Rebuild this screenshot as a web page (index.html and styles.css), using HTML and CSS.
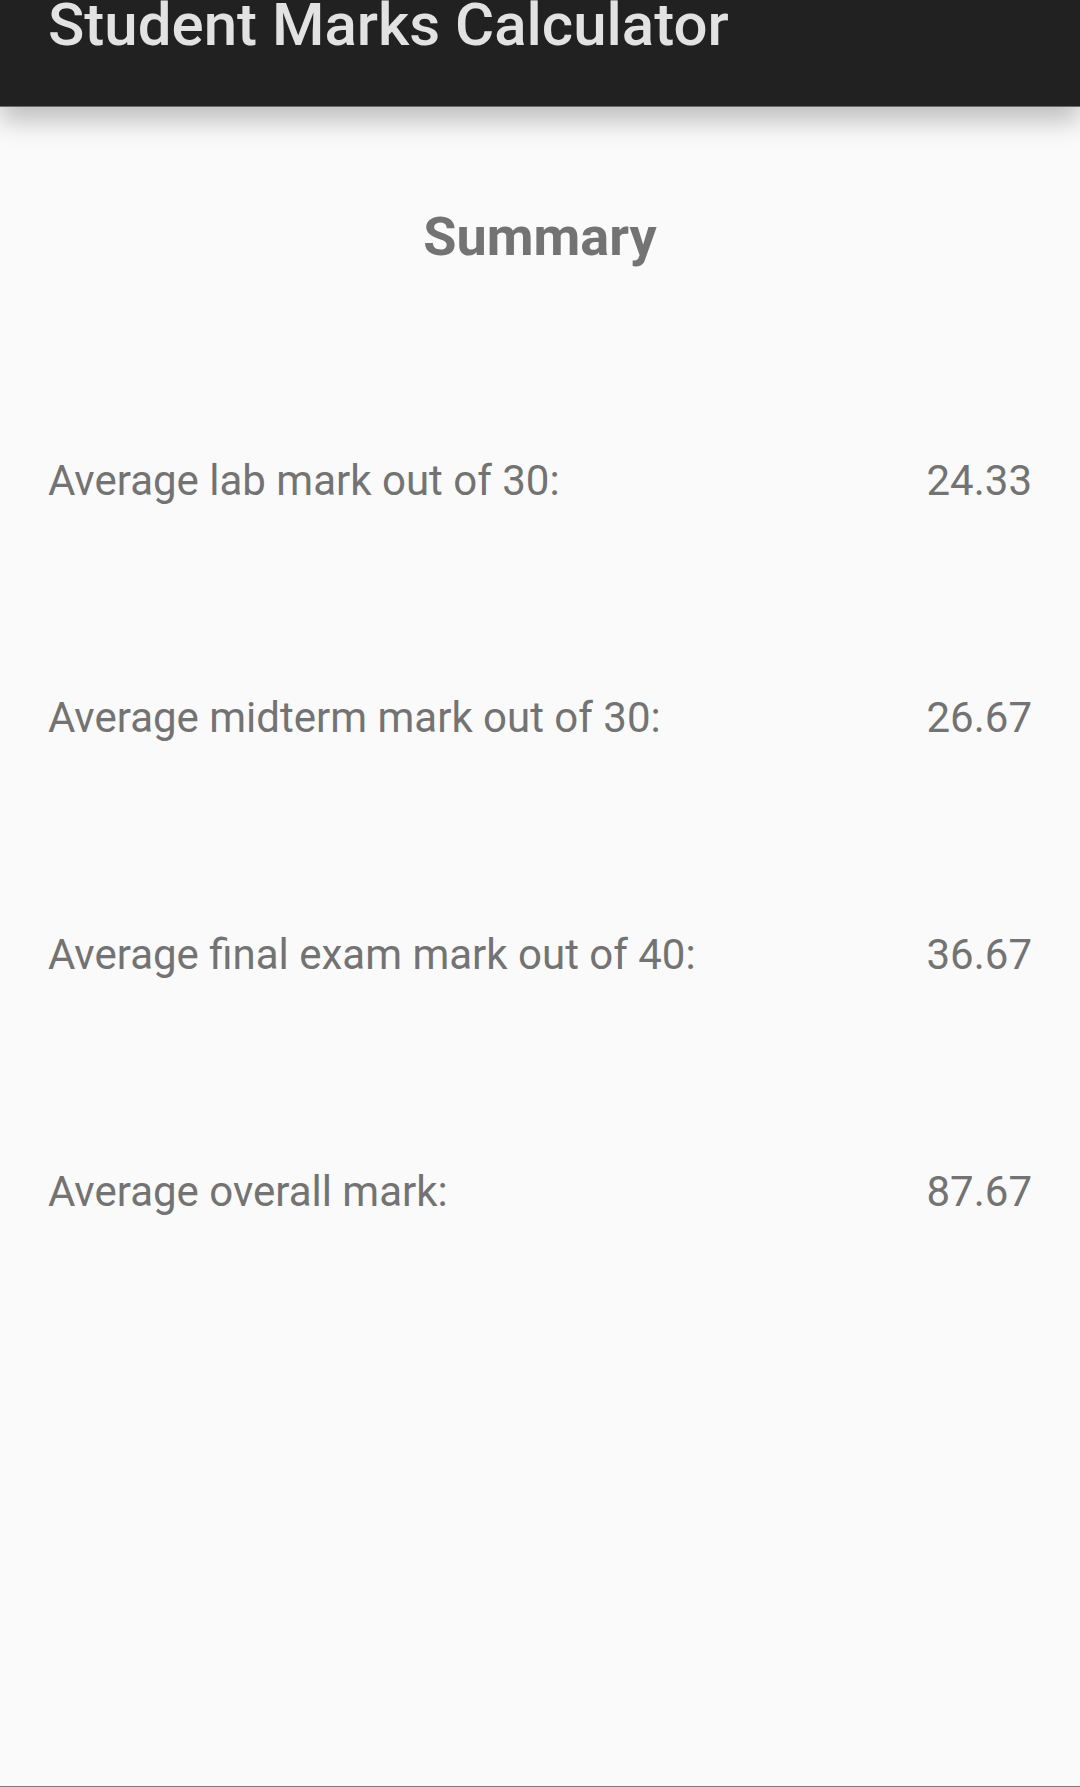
FILE: index.html
```html
<!DOCTYPE html>
<html lang="en">
<head>
<meta charset="utf-8">
<title>Student Marks Calculator</title>
<link rel="stylesheet" href="styles.css">
</head>
<body>
<header class="app-bar"><h1 class="app-title">Student Marks Calculator</h1></header>
<main class="content">
<h2 class="heading">Summary</h2>
<dl class="marks">
<div class="mark"><dt>Average lab mark out of 30:</dt><dd>24.33</dd></div>
<div class="mark"><dt>Average midterm mark out of 30:</dt><dd>26.67</dd></div>
<div class="mark"><dt>Average final exam mark out of 40:</dt><dd>36.67</dd></div>
<div class="mark"><dt>Average overall mark:</dt><dd>87.67</dd></div>
</dl>
</main>
</body>
</html>
```
FILE: styles.css
```css
* {
  box-sizing: border-box;
  margin: 0;
}

body {
  display: flex;
  flex-direction: column;
  min-height: 100vh;
  background: #fafafa;
  color: #737373;
  font-family: Roboto, sans-serif;
  border-bottom: 1px solid #7d7d7d;
}

.app-bar {
  padding: 0 48px 56px;
  background: #212121;
  color: #e2e2e2;
  border-bottom: 1px solid #6a6a6a;
  box-shadow: 0 14px 24px 0 rgba(0, 0, 0, 0.24);
}

.app-title {
  font-size: 60px;
  font-weight: 500;
  line-height: 50px;
}

.content {
  padding: 98px 48px;
}

.heading {
  font-size: 54px;
  font-weight: 700;
  line-height: 64px;
  text-align: center;
}

.marks {
  display: grid;
  gap: 189px;
  margin-top: 188px;
}

.mark {
  display: flex;
  justify-content: space-between;
  font-size: 42px;
  line-height: 48px;
}
```
